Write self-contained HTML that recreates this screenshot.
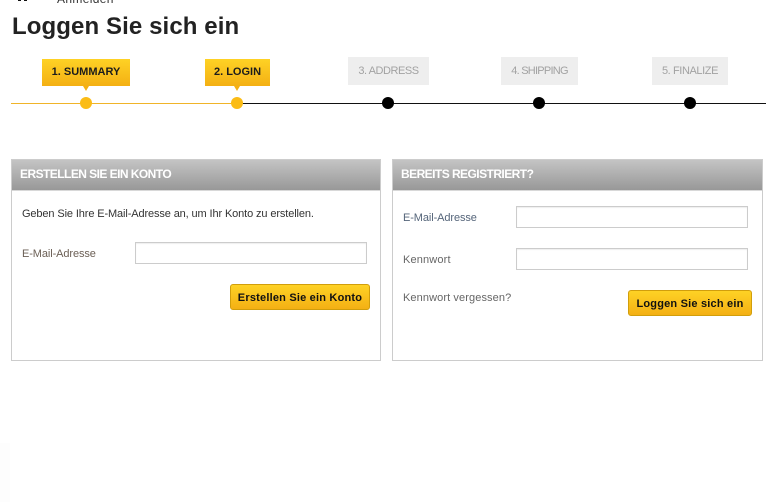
<!DOCTYPE html>
<html>
<head>
<meta charset="utf-8">
<style>
html,body{margin:0;padding:0;background:#fff;}
body{width:768px;height:502px;position:relative;overflow:hidden;font-family:"Liberation Sans",sans-serif;}
.a{position:absolute;white-space:nowrap;}
.step{position:absolute;text-align:center;font-size:11px;box-sizing:border-box;white-space:nowrap;}
.on{top:59px;height:27px;line-height:27px;background:linear-gradient(#fed225,#f4b014);color:#1c1c1c;font-weight:bold;}
.off{top:57px;height:28px;line-height:29px;background:#eeeeee;color:#a2a2a2;}
.arrow{position:absolute;top:86px;width:0;height:0;border-left:3px solid transparent;border-right:3px solid transparent;border-top:5px solid #f4b014;}
.dot{position:absolute;top:97px;width:12px;height:12px;border-radius:50%;}
.y{background:#fbbc16;}
.k{background:#000;}
.panel{position:absolute;top:159px;height:202px;box-sizing:border-box;border:1px solid #cccccc;background:#fff;}
.head{position:absolute;left:0;right:0;top:0;height:31px;box-sizing:border-box;background:linear-gradient(#c4c4c4,#989898);border-bottom:1px solid #d8d8d8;color:#fff;font-weight:bold;font-size:12px;line-height:29px;padding-left:8px;letter-spacing:-.55px;}
.lbl{position:absolute;font-size:11px;color:#666;white-space:nowrap;line-height:12px;}
.inp{position:absolute;width:232px;height:22px;box-sizing:border-box;border:1px solid #cccccc;background:#fff;box-shadow:inset 0 1px 1px #eee;}
.btn{position:absolute;height:26px;box-sizing:border-box;border:1px solid #d19e0c;border-radius:3px;background:linear-gradient(#fed225,#f4b014);color:#111;font-weight:bold;font-size:11px;line-height:26px;text-align:center;letter-spacing:.2px;white-space:nowrap;}
</style>
</head>
<body>
<div class="a" style="left:18px;top:-4px;width:3px;height:5px;background:#111;"></div>
<div class="a" style="left:24px;top:-4px;width:3px;height:5px;background:#111;"></div>
<div class="a" style="left:57px;top:-8px;font-size:12px;line-height:14px;color:#333;letter-spacing:.35px;">Anmelden</div>
<div class="a" style="left:12px;top:13px;font-size:24px;line-height:28px;font-weight:bold;color:#222;letter-spacing:.1px;">Loggen Sie sich ein</div>

<div class="a" style="left:11px;top:103px;width:226px;height:1px;background:#f0b429;"></div>
<div class="a" style="left:237px;top:103px;width:529px;height:1px;background:#111;"></div>

<div class="step on" style="left:42px;width:88px;">1. SUMMARY</div>
<div class="arrow" style="left:83px;"></div>
<div class="step on" style="left:205px;width:65px;">2. LOGIN</div>
<div class="arrow" style="left:234px;"></div>
<div class="step off" style="left:348px;width:81px;letter-spacing:-.45px;">3. ADDRESS</div>
<div class="step off" style="left:501px;width:77px;letter-spacing:-.75px;">4. SHIPPING</div>
<div class="step off" style="left:652px;width:76px;letter-spacing:-.4px;">5. FINALIZE</div>

<div class="dot y" style="left:80px;"></div>
<div class="dot y" style="left:231px;"></div>
<div class="dot k" style="left:382px;"></div>
<div class="dot k" style="left:533px;"></div>
<div class="dot k" style="left:684px;"></div>

<div class="panel" style="left:11px;width:370px;">
  <div class="head">ERSTELLEN SIE EIN KONTO</div>
</div>
<div class="lbl" style="left:22px;top:208px;color:#333;letter-spacing:-.12px;">Geben Sie Ihre E-Mail-Adresse an, um Ihr Konto zu erstellen.</div>
<div class="lbl" style="left:22px;top:248px;color:#6b5f55;letter-spacing:-.1px;">E-Mail-Adresse</div>
<div class="inp" style="left:135px;top:242px;"></div>
<div class="btn" style="left:230px;top:284px;width:140px;">Erstellen Sie ein Konto</div>

<div class="panel" style="left:392px;width:371px;">
  <div class="head">BEREITS REGISTRIERT?</div>
</div>
<div class="lbl" style="left:403px;top:212px;color:#55657a;letter-spacing:-.1px;">E-Mail-Adresse</div>
<div class="inp" style="left:516px;top:206px;"></div>
<div class="lbl" style="left:403px;top:254px;letter-spacing:.15px;">Kennwort</div>
<div class="inp" style="left:516px;top:248px;"></div>
<div class="lbl" style="left:403px;top:292px;letter-spacing:.1px;">Kennwort vergessen?</div>
<div class="btn" style="left:628px;top:290px;width:124px;">Loggen Sie sich ein</div>

<div class="a" style="left:0;top:443px;width:10px;height:59px;background:#fdfdfd;"></div>
</body>
</html>
